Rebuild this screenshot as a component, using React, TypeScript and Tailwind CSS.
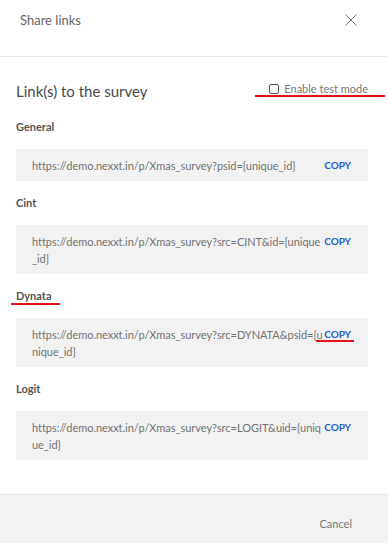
const links = [
  { name: 'General', url: 'https://demo.nexxt.in/p/Xmas_survey?psid={unique_id}' },
  { name: 'Cint', url: 'https://demo.nexxt.in/p/Xmas_survey?src=CINT&id={unique_id}' },
  { name: 'Dynata', url: 'https://demo.nexxt.in/p/Xmas_survey?src=DYNATA&psid={unique_id}', marked: true },
  { name: 'Logit', url: 'https://demo.nexxt.in/p/Xmas_survey?src=LOGIT&uid={unique_id}' },
]

export default function App() {
  return (
    <div className="flex h-[543px] w-[388px] flex-col bg-white font-['Lato',sans-serif] text-[#666]">
      <div className="flex h-[57px] shrink-0 items-start justify-between border-b border-[#e8e8e8] pl-[20px] pr-[31px] pt-[10px]">
        <span className="text-[13px] leading-[20px] text-[#666]">Share links</span>
        <svg width="12" height="12" viewBox="0 0 12 12" className="mt-[4px] text-[#777]">
          <path d="M0.5 0.5l11 11M11.5 0.5l-11 11" stroke="currentColor" strokeWidth="1" />
        </svg>
      </div>

      <div className="flex-1 px-[16px] pr-[20px]">
        <div className="mt-[24px] flex items-start justify-between">
          <span className="text-[15px] leading-[20px] text-[#4a4a4a]">Link(s) to the survey</span>
          <label className="relative flex items-center gap-[5px] text-[11px] leading-[16px] text-[#777]">
            <span className="h-[10px] w-[10px] rounded-[2px] border border-[#555]" />
            Enable test mode
            <span className="absolute left-[-14px] top-[14px] h-[2px] w-[130px] bg-[#e5141b]" />
          </label>
        </div>

        <div className="pt-[4px]">
          {links.map((l) => (
            <div key={l.name}>
              <div className="mt-[14px] text-[11px] font-bold leading-[16px] text-[#555]">
                {l.marked ? (
                  <span className="relative">
                    {l.name}
                    <span className="absolute left-[-5px] right-[-8px] top-[14px] h-[2px] bg-[#e5141b]" />
                  </span>
                ) : (
                  l.name
                )}
              </div>
              <div className="mt-[14px] flex items-start bg-[#f2f2f2] py-[7.5px] pl-[16px] pr-[17px]">
                <span className="min-w-0 flex-1 break-all text-[11px] leading-[17px] tracking-[-0.04px] text-[#737373]">{l.url}</span>
                <span className="relative shrink-0 text-[10px] font-bold leading-[17px] tracking-[-0.1px] text-[#1f5fc4]">
                  COPY
                  {l.marked && <span className="absolute left-[-8px] right-[-3px] top-[14px] h-[2px] bg-[#e5141b]" />}
                </span>
              </div>
            </div>
          ))}
        </div>
      </div>

      <div className="flex h-[49px] shrink-0 items-start justify-end border-t border-[#e6e6e6] bg-[#f3f3f3] pr-[36px] pt-[21px]">
        <span className="text-[11px] leading-[16px] text-[#777]">Cancel</span>
      </div>
    </div>
  )
}
